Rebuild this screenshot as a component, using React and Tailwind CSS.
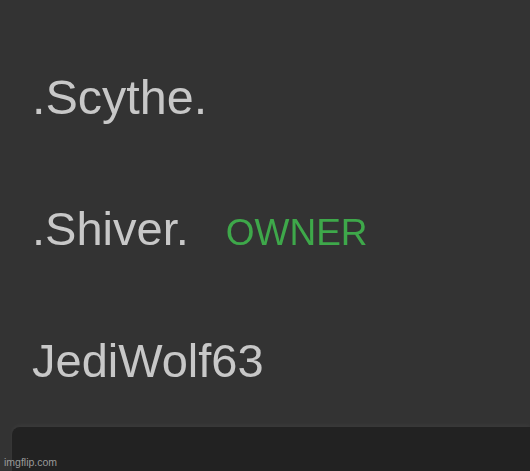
const members = [
  { name: ".Scythe.", size: "text-[48.5px]" },
  { name: ".Shiver.", size: "text-[47px]", badge: "OWNER" },
  { name: "JediWolf63", size: "text-[47px]" },
];

export default function App() {
  return (
    <div
      className="relative flex h-[471px] w-[530px] flex-col overflow-hidden bg-[#333333]"
      style={{ fontFamily: '"Liberation Sans", Arial, sans-serif' }}
    >
      {/* member list */}
      <div className="flex flex-col gap-[85px] pl-[32px] pt-[73px]">
        {members.map((m) => (
          <div key={m.name} className="flex h-[47px] items-baseline">
            <span className={`${m.size} leading-none text-[#c8c8c8] blur-[0.5px]`}>{m.name}</span>
            {m.badge && (
              <span className="ml-[37px] text-[37px] leading-none text-[#3ea84a] blur-[0.5px]">{m.badge}</span>
            )}
          </div>
        ))}
      </div>

      {/* message box */}
      <div className="ml-[12px] mt-[43px] flex-1 rounded-tl-[8px] bg-[#222222] shadow-[0_-2px_4px_rgba(255,255,255,0.04)]" />

      <span className="absolute bottom-[4px] left-[4px] text-[10.5px] leading-none text-[#9a9a9a]">
        imgflip.com
      </span>
    </div>
  );
}
